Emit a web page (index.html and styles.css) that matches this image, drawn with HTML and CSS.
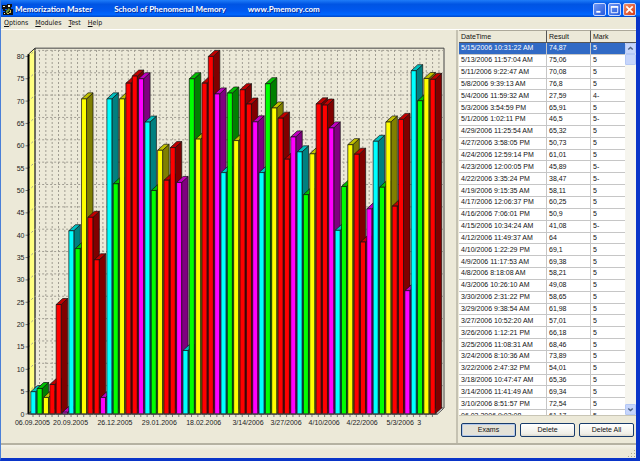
FILE: index.html
```html
<!DOCTYPE html>
<html lang="en">

<head>
    <meta charset="UTF-8">
    <meta name="viewport" content="width=device-width, initial-scale=1.0">
    <title>Memorization Master</title>
    <link rel="stylesheet" href="styles.css">
</head>

<body>
    <div class="window">
        <header class="titlebar">
            <svg class="app-icon" viewBox="0 0 11 11">
                <path d="M0 1h5v4H3v2H1V5H0zM5 0h5v3H9v2h2v6H1V8h2V6h2z" fill="#111" />
                <path d="M1 2h2v1H1zM6 1h2v2H6zM2 9h1v1H2z" fill="#e8e8d0" />
                <path d="M4 7l3-3 1 2-3 3H4z" fill="#6f9a3c" />
                <path d="M8 6h1v3H7V8h1zM5 9h2v1H5z" fill="#d8c24a" />
            </svg>
            <h1>
                <span>Memorization Master</span>
                <span>School of Phenomenal Memory</span>
                <span>www.Pmemory.com</span>
            </h1>
            <div class="window-buttons">
                <button type="button" aria-label="Minimize">
                    <svg viewBox="0 0 12 12"><path d="M2.5 8.5h4.5" stroke="#fff" stroke-width="2" /></svg>
                </button>
                <button type="button" aria-label="Maximize">
                    <svg viewBox="0 0 12 12"><path d="M2.5 3h7v6.5h-7z" fill="none" stroke="#fff" /><path d="M2 3.2h8" stroke="#fff" stroke-width="1.8" /></svg>
                </button>
                <button type="button" class="close" aria-label="Close">
                    <svg viewBox="0 0 12 12"><path d="M2.5 2.5l7 7M9.5 2.5l-7 7" stroke="#fff" stroke-width="1.8" /></svg>
                </button>
            </div>
        </header>
        <nav class="menu">
            <a href="#"><u>O</u>ptions</a>
            <a href="#"><u>M</u>odules</a>
            <a href="#"><u>T</u>est</a>
            <a href="#"><u>H</u>elp</a>
        </nav>
        <main class="content">
            <section class="chart-panel">
                <svg class="chart" id="chart" viewBox="0 0 454 413" role="img" aria-label="Exam results"></svg>
            </section>
            <section class="results">
                <div class="list">
                    <table>
                        <colgroup>
                            <col class="col-date">
                            <col class="col-result">
                            <col>
                        </colgroup>
                        <thead>
                            <tr>
                                <th>DateTime</th>
                                <th>Result</th>
                                <th>Mark</th>
                            </tr>
                        </thead>
                        <tbody id="rows"></tbody>
                    </table>
                    <div class="scrollbar">
                        <button type="button" aria-label="Scroll up">
                            <svg viewBox="0 0 10 10"><path d="M2.5 6.2L5 3.8l2.5 2.4" /></svg>
                        </button>
                        <div class="thumb"></div>
                        <button type="button" aria-label="Scroll down">
                            <svg viewBox="0 0 10 10"><path d="M2.5 3.8L5 6.2l2.5-2.4" /></svg>
                        </button>
                    </div>
                </div>
                <div class="actions">
                    <button type="button" class="active">Exams</button>
                    <button type="button">Delete</button>
                    <button type="button">Delete All</button>
                </div>
            </section>
        </main>
        <footer class="statusbar">
            <svg class="grip" viewBox="0 0 9 9">
                <path d="M7 1h1v1H7zM4 4h1v1H4zM7 4h1v1H7zM1 7h1v1H1zM4 7h1v1H4zM7 7h1v1H7z" />
            </svg>
        </footer>
    </div>
    <script src="script.js"></script>
</body>

</html>
```
FILE: styles.css
```css
*,
*::after,
*::before {
    margin: 0;
    padding: 0;
    box-sizing: border-box;
}

body {
    height: 100vh;
    font-family: "Liberation Sans", Arial, sans-serif;
    font-size: 7px;
    line-height: 10px;
    color: #111;
    background-color: #ece9d8;
}

button {
    font: inherit;
    color: inherit;
}

button svg {
    display: block;
    width: 100%;
    height: 100%;
}

.window {
    display: flex;
    flex-direction: column;
    height: 100%;
    border: solid #0a35c8;
    border-width: 0 4px 3px 1px;
    border-left-color: #4a7fd8;
}

/* title bar */
.titlebar {
    display: flex;
    flex: none;
    align-items: center;
    height: 17px;
    margin-right: -4px;
    padding: 1px 4px 0 1px;
    background: linear-gradient(#1f7cf8, #0054e3 25%, #0058ee 60%, #0066ff 85%, #0048c8);
}

.app-icon {
    width: 11px;
    height: 11px;
    margin-right: 2px;
}

h1 {
    display: flex;
    flex: 1;
    gap: 22px;
    font-family: Lato, sans-serif;
    font-size: 8px;
    font-weight: 700;
    line-height: 12px;
    white-space: nowrap;
    color: #fff;
    text-shadow: 1px 1px #0a2f9c;
}

.window-buttons {
    display: flex;
    gap: 2px;
}

.window-buttons button {
    width: 13px;
    height: 13px;
    border: 1px solid #c8d8ff;
    border-radius: 2px;
    background: linear-gradient(135deg, #6f98f5, #2458dc);
}

.window-buttons .close {
    background: linear-gradient(135deg, #f0906c, #d83a12);
}

/* menu */
.menu {
    display: flex;
    flex: none;
    gap: 7px;
    height: 13px;
    padding: 1px 3px;
    border-bottom: 1px solid #fff;
    font-family: "DejaVu Sans Condensed", sans-serif;
}

.menu a {
    color: inherit;
    text-decoration: none;
}

/* chart */
.content {
    display: flex;
    flex: 1;
    min-height: 0;
}

.chart-panel {
    flex: 1;
    min-width: 0;
    border-right: 2px solid #c5c2b2;
}

.chart {
    display: block;
    width: 100%;
    height: 100%;
}

.chart text {
    font-size: 7px;
    fill: #222;
}

.y-label {
    text-anchor: end;
}

.x-label {
    text-anchor: middle;
}

.grid {
    fill: none;
    stroke: #a09d92;
    stroke-dasharray: 2 2;
}

.wall {
    fill: #ffff80;
    stroke: #333;
}

.frame {
    fill: none;
    stroke: #444;
}

.floor {
    fill: #fff;
    stroke: #444;
}

.axis {
    stroke: #000;
    stroke-width: 2;
}

.tick {
    stroke: #777;
}

.bar {
    stroke: #111;
    stroke-width: .7;
    stroke-linejoin: round;
}

/* results list */
.results {
    display: flex;
    flex-direction: column;
    flex: none;
    width: 178px;
    padding-left: 1px;
}

.list {
    position: relative;
    flex: 1;
    min-height: 0;
    overflow: hidden;
    border-bottom: 1px solid #c8c5b5;
    background-color: #fff;
}

table {
    width: 100%;
    height: 392px;
    table-layout: fixed;
    border-collapse: separate;
    border-spacing: 0;
}

.col-date {
    width: 88px;
}

.col-result {
    width: 44px;
}

th {
    height: 13px;
    padding-left: 2px;
    border: solid #555;
    border-width: 1px 1px 1px 0;
    border-top-color: #aca899;
    font-weight: normal;
    text-align: left;
    background-color: #ece9d8;
}

th:last-child {
    border-right: 0;
}

td {
    padding-left: 2px;
    border: solid #c6c6c6;
    border-width: 0 1px 1px 0;
    line-height: 10px;
    white-space: nowrap;
}

.selected td {
    color: #fff;
    background-color: #316ac5;
}

.scrollbar {
    position: absolute;
    top: 13px;
    right: 0;
    bottom: 0;
    display: flex;
    flex-direction: column;
    width: 11px;
    background-color: #f6f5ee;
}

.scrollbar button,
.thumb {
    flex: none;
    height: 11px;
    border: 1px solid #b4c8f6;
    border-radius: 1px;
    background-color: #c6d5fb;
}

.scrollbar button:last-child {
    margin-top: auto;
}

.scrollbar path {
    fill: none;
    stroke: #4d6185;
    stroke-width: 1.6;
}

.actions {
    display: flex;
    flex: none;
    gap: 4px;
    height: 27px;
    padding: 7px 2px 6px;
}

.actions button {
    flex: 1;
    border: 1px solid #173b6b;
    border-radius: 2px;
    background: linear-gradient(#fff, #f0efe8 80%, #dcd8cc);
}

.actions .active {
    background: #e4e2d8;
    box-shadow: inset 0 0 0 1px #b3c8ea;
}

/* status bar */
.statusbar {
    display: flex;
    flex: none;
    align-items: flex-end;
    justify-content: flex-end;
    height: 15px;
    border-top: 2px solid #b5b2a2;
    background: linear-gradient(#f4f2e8, #ece9d8 40%);
}

.grip {
    width: 9px;
    height: 9px;
    fill: #a8a592;
}
```
FILE: script.js
```js
const exams = [
    ['5/15/2006 10:31:22 AM', '74,87', '5'],
    ['5/13/2006 11:57:04 AM', '75,06', '5'],
    ['5/11/2006 9:22:47 AM', '70,08', '5'],
    ['5/8/2006 9:39:13 AM', '76,8', '5'],
    ['5/4/2006 11:59:32 AM', '27,59', '4-'],
    ['5/3/2006 3:54:59 PM', '65,91', '5'],
    ['5/1/2006 1:02:11 PM', '46,5', '5-'],
    ['4/29/2006 11:25:54 AM', '65,32', '5'],
    ['4/27/2006 3:58:05 PM', '50,73', '5'],
    ['4/24/2006 12:59:14 PM', '61,01', '5'],
    ['4/23/2006 12:00:05 PM', '45,89', '5-'],
    ['4/22/2006 3:35:24 PM', '38,47', '5-'],
    ['4/19/2006 9:15:35 AM', '58,11', '5'],
    ['4/17/2006 12:06:37 PM', '60,25', '5'],
    ['4/16/2006 7:06:01 PM', '50,9', '5'],
    ['4/15/2006 10:34:24 AM', '41,08', '5-'],
    ['4/12/2006 11:49:37 AM', '64', '5'],
    ['4/10/2006 1:22:29 PM', '69,1', '5'],
    ['4/9/2006 11:17:53 AM', '69,38', '5'],
    ['4/8/2006 8:18:08 AM', '58,21', '5'],
    ['4/3/2006 10:26:10 AM', '49,08', '5'],
    ['3/30/2006 2:31:22 PM', '58,65', '5'],
    ['3/29/2006 9:38:54 AM', '61,98', '5'],
    ['3/27/2006 10:52:20 AM', '57,01', '5'],
    ['3/26/2006 1:12:21 PM', '66,18', '5'],
    ['3/25/2006 11:08:31 AM', '68,46', '5'],
    ['3/24/2006 8:10:36 AM', '73,89', '5'],
    ['3/22/2006 2:47:32 PM', '54,01', '5'],
    ['3/18/2006 10:47:47 AM', '65,36', '5'],
    ['3/14/2006 11:41:49 AM', '69,34', '5'],
    ['3/10/2006 8:51:57 PM', '72,54', '5'],
    ['06.03.2006 9:02:08', '61,17', '5']
];

// results older than the ones in the list
const older = [
    5, 5.7, 3.7, 6.6, 24.5, 0.4, 41, 37, 70.5, 44, 34.5, 3.7,
    70.5, 51.5, 70.5, 74, 75.6, 75, 65.3, 50, 59, 52.3, 59.6, 51.8,
    14.2, 75, 61.5, 74, 80, 71.6, 54, 71.8
];

// front, top and side colour of each bar
const colors = [
    ['#00ffff', '#00c0c0', '#008080'],
    ['#00ff00', '#00c000', '#008000'],
    ['#ffff00', '#c0c000', '#808000'],
    ['#ff0000', '#c00000', '#800000'],
    ['#ff0000', '#c00000', '#800000'],
    ['#ff00ff', '#c000c0', '#800080']
];

const labels = [
    [0, '06.09.2005'], [6, '20.09.2005'], [13, '26.12.2005'], [20, '29.01.2006'],
    [27, '18.02.2006'], [34, '3/14/2006'], [40, '3/27/2006'], [46, '4/10/2006'],
    [52, '4/22/2006'], [58, '5/3/2006'], [61, '3']
];

document.getElementById('rows').innerHTML = exams.map((row, i) =>
    `<tr${i === 0 ? ' class="selected"' : ''}>${row.map(cell => `<td>${cell}</td>`).join('')}</tr>`
).join('');

const values = older.concat(exams.map(row => parseFloat(row[1].replace(',', '.'))).reverse());
const left = 27, right = 436, base = 384, unit = 4.47, step = 6.34, barWidth = 5, depth = 6.5, rise = 6;
const top80 = base - 80.5 * unit;
const y = value => base - value * unit;
let svg = '';

// walls
svg += `<path class="wall" d="M${left} ${top80}l${depth} ${-rise}V${base - rise}l${-depth} ${rise}z"/>`;
svg += `<path class="frame" d="M${left + depth} ${base - rise}V${top80 - rise}H${right + depth}V${base - rise}"/>`;
svg += `<path class="floor" d="M${left} ${base}l${depth} ${-rise}H${right + depth}l${-depth} ${rise}z"/>`;

for (let v = 0; v <= 80; v += 5) {
    svg += `<path class="grid" d="M${left} ${y(v)}l${depth} ${-rise}H${right + depth}"/>`;
    svg += `<path class="tick" d="M${left - 3} ${y(v)}h3"/>`;
    svg += `<text class="y-label" x="${left - 4}" y="${y(v) + 2.5}">${v}</text>`;
}
values.forEach((value, i) => {
    const x = left + 4.5 + i * step;
    svg += `<path class="grid" d="M${x + depth} ${base - rise}V${top80 - rise}"/>`;
    svg += `<path class="tick" d="M${x} ${base}v3"/>`;
});

// bars
values.forEach((value, i) => {
    const [front, top, side] = colors[i % 6];
    const x = left + 2.3 + i * step;
    const h = value * unit;
    svg += `<path class="bar" fill="${side}" d="M${x + barWidth} ${base}v${-h}l${depth} ${-rise}v${h}z"/>`;
    svg += `<path class="bar" fill="${top}" d="M${x} ${base - h}l${depth} ${-rise}h${barWidth}l${-depth} ${rise}z"/>`;
    svg += `<path class="bar" fill="${front}" d="M${x} ${base}v${-h}h${barWidth}v${h}z"/>`;
});

svg += `<path class="axis" d="M${left} ${top80}V${base}"/>`;
svg += `<path class="frame" d="M${left} ${base}H${right}"/>`;
labels.forEach(([i, text]) => {
    svg += `<text class="x-label" x="${left + 4 + i * step}" y="${base + 11}">${text}</text>`;
});

document.getElementById('chart').innerHTML = svg;
```
